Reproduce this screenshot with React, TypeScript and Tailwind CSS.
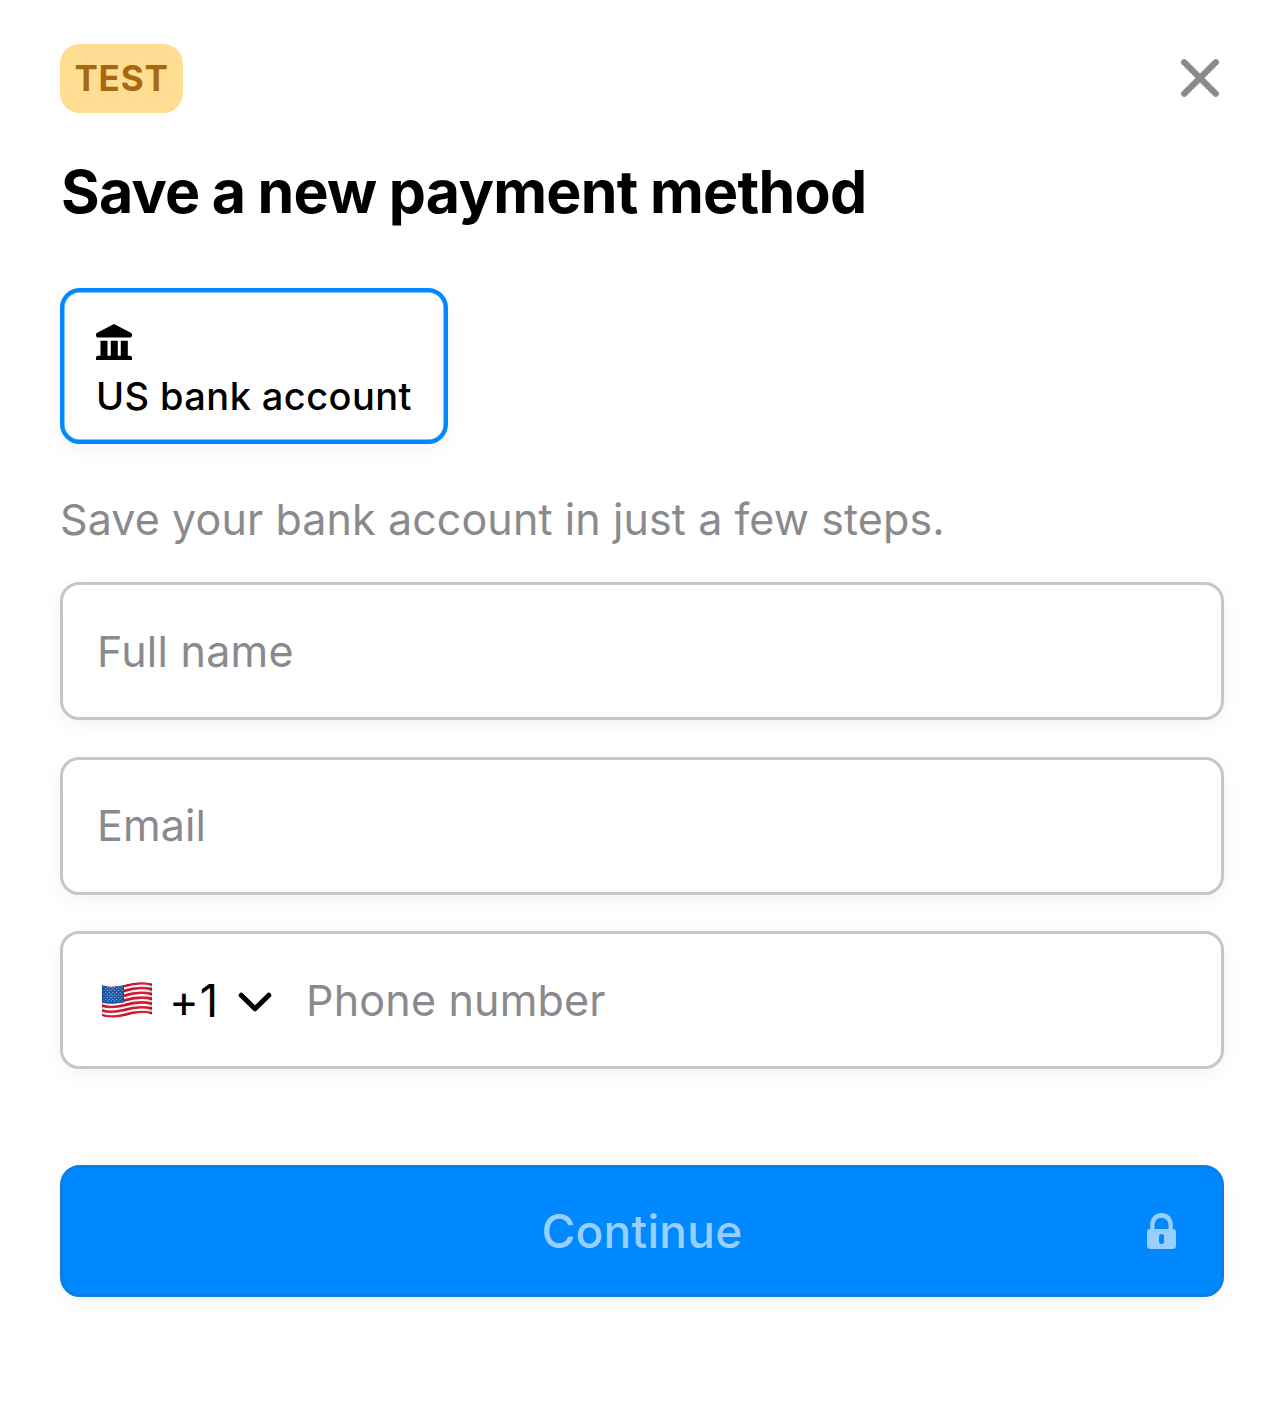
import React from "react";

const WAVE_ROWS = Array.from({ length: 13 }, (_, i) => i);
const STARS = Array.from({ length: 9 }, (_, r) =>
  Array.from({ length: r % 2 ? 5 : 6 }, (_, c) => ({
    x: 1.9 + c * 3.6 + (r % 2 ? 1.8 : 0),
    y: 5 + r * 1.75,
  })),
).flat();

function CloseIcon() {
  return (
    <svg width="40" height="40" viewBox="0 0 40 40" fill="none" stroke="#8a8a8e" strokeWidth="6.2" strokeLinecap="round">
      <path d="M4.2 4.2 35.8 35.8M35.8 4.2 4.2 35.8" />
    </svg>
  );
}

function BankIcon() {
  return (
    <svg width="36" height="36" viewBox="0 0 36 36" fill="#000" className="block">
      <path d="M18 0 34.8 8.8Q36 9.4 36 10.6V11.6Q36 13.6 34 13.6H2Q0 13.6 0 11.6V10.6Q0 9.4 1.2 8.8Z" />
      <path d="M4.5 16.8h7v15h3.3v-15h7v15h3v-15h7v15h2.2q2 0 2 2V36H0v-2.2q0-2 2-2h2.5z" />
    </svg>
  );
}

function FlagIcon() {
  return (
    <svg width="50" height="36" viewBox="0 0 50 36" className="block">
      <defs>
        <clipPath id="flag">
          <path d="M0 3.3Q8 6 20 3.6 35-.6 44 .5 48 .9 50 1.6V32.5Q42 29.5 30 32.6 18 36.3 8 35.6 3 35.4 0 34Z" />
        </clipPath>
        <linearGradient id="shade">
          <stop offset="0" stopColor="#000" stopOpacity=".14" />
          <stop offset=".18" stopColor="#fff" stopOpacity=".05" />
          <stop offset=".5" stopColor="#000" stopOpacity=".07" />
          <stop offset=".8" stopColor="#fff" stopOpacity=".05" />
          <stop offset="1" stopColor="#000" stopOpacity=".22" />
        </linearGradient>
      </defs>
      <g clipPath="url(#flag)">
        <rect width="50" height="36" fill="#fff" />
        {WAVE_ROWS.filter((i) => i % 2 === 0).map((i) => (
          <path
            key={i}
            transform={`translate(0 ${i * 2.4})`}
            d="M-1 4.2Q9 7.3 22 4.1 38-1 51 2.8"
            fill="none"
            stroke="#d80f2c"
            strokeWidth="2.6"
          />
        ))}
        <path d="M0 3.3Q8 6 22 3.2V20.5Q9 22.8 0 20.4Z" fill="#0b51a5" />
        {STARS.map((s, i) => (
          <circle key={i} cx={s.x} cy={s.y} r=".6" fill="#c9d9ee" />
        ))}
        <rect width="50" height="36" fill="url(#shade)" />
      </g>
    </svg>
  );
}

function ChevronIcon() {
  return (
    <svg width="34" height="20" viewBox="0 0 34 20" fill="none" stroke="#000" strokeWidth="5" strokeLinecap="round" strokeLinejoin="round" className="block">
      <path d="M3.2 3.2 17 16.8 30.8 3.2" />
    </svg>
  );
}

function LockIcon() {
  return (
    <svg width="29" height="36" viewBox="0 0 29 36" className="block">
      <path
        fillRule="evenodd"
        fill="#99cfff"
        d="M3.2 16V11.3a11.3 11.3 0 0 1 22.6 0V16H26q3 0 3 3V32.5Q29 36 25.5 36H3.5Q0 36 0 32.5V19q0-3 3-3ZM7.5 16h14V11.8a7 7 0 0 0-14 0ZM12 23.4v5a2.5 2.5 0 0 0 5 0v-5a2.5 2.5 0 0 0-5 0Z"
      />
    </svg>
  );
}

const field =
  "flex h-[138px] w-full items-center rounded-[19px] border-[3px] border-[#c6c6ca] bg-white px-[34px] shadow-[0_5px_20px_rgba(0,0,0,0.05)]";
const placeholder = "whitespace-nowrap text-[#8a8a8e]";

export default function App() {
  return (
    <main className="flex h-[1417px] w-full flex-col bg-white px-[60px] pt-[44px] font-['Inter',sans-serif] text-black">
      <header className="flex h-[69px] items-center justify-between">
        <div className="flex h-[69px] w-[123px] items-center justify-center rounded-[20px] bg-[#ffdd93]">
          <span className="text-[35px] leading-none font-bold tracking-[0.8px] text-[#a76811]">TEST</span>
        </div>
        <button aria-label="Close" className="mr-1 mb-[2px]">
          <CloseIcon />
        </button>
      </header>

      <h1 className="mt-[43px] ml-px h-[72px] text-[59px] leading-[72px] font-bold tracking-[-0.72px] whitespace-nowrap [word-spacing:-1px]">
        Save a new payment method
      </h1>

      <button className="mt-[60px] flex h-[156px] w-[388px] flex-col items-start rounded-[20px] border-[4px] border-[#0088ff] bg-white pt-[32px] pl-[32px] shadow-[inset_0_0_0_0.5px_#0088ff,0_5px_20px_rgba(0,0,0,0.05)]">
        <BankIcon />
        <span className="mt-[12px] text-[38px] leading-[48px] font-medium tracking-[0.42px] whitespace-nowrap">US bank account</span>
      </button>

      <p className="mt-[48px] h-[55px] text-[43px] leading-[54px] tracking-[0.1px] whitespace-nowrap text-[#8a8a8e]">
        Save your bank account in just a few steps.
      </p>

      <section className="mt-[35px] flex flex-col gap-[36.5px]">
        <div className={field}>
          <span className={`${placeholder} text-[43px] tracking-[0.25px]`}>Full name</span>
        </div>
        <div className={field}>
          <span className={`${placeholder} text-[43px] tracking-[0.1px]`}>Email</span>
        </div>
        <div className={field}>
          <div className="ml-[5px]">
            <FlagIcon />
          </div>
          <span className="ml-[17px] w-[50px] pt-px text-[45px] tracking-[0.9px]">+1</span>
          <div className="mt-[4px] ml-[19px]">
            <ChevronIcon />
          </div>
          <span className={`${placeholder} ml-[34px] text-[43px] tracking-[0.2px]`}>Phone number</span>
        </div>
      </section>

      <button className="relative mt-[96px] flex h-[132px] w-full items-center justify-center rounded-[20px] border-[3px] border-[#0a7de6] bg-[#0088ff] shadow-[0_5px_20px_rgba(0,0,0,0.05)]">
        <span className="text-[46px] leading-none font-medium tracking-[0.3px] text-[#99cfff]">Continue</span>
        <span className="absolute right-[45px]">
          <LockIcon />
        </span>
      </button>
    </main>
  );
}
